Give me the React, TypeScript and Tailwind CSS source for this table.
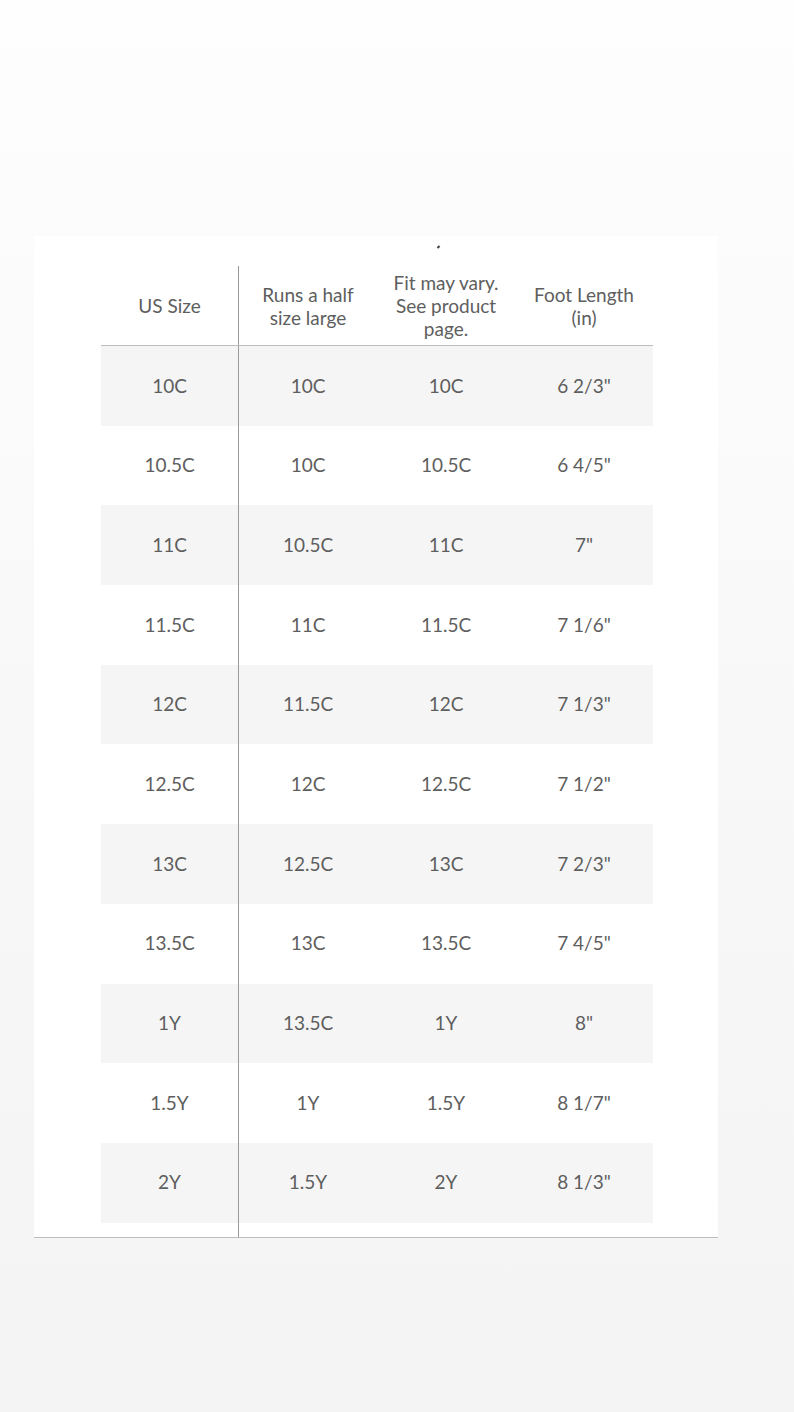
import React from 'react';

const rows: [string, string, string, string][] = [
  ['10C', '10C', '10C', '6 2/3"'],
  ['10.5C', '10C', '10.5C', '6 4/5"'],
  ['11C', '10.5C', '11C', '7"'],
  ['11.5C', '11C', '11.5C', '7 1/6"'],
  ['12C', '11.5C', '12C', '7 1/3"'],
  ['12.5C', '12C', '12.5C', '7 1/2"'],
  ['13C', '12.5C', '13C', '7 2/3"'],
  ['13.5C', '13C', '13.5C', '7 4/5"'],
  ['1Y', '13.5C', '1Y', '8"'],
  ['1.5Y', '1Y', '1.5Y', '8 1/7"'],
  ['2Y', '1.5Y', '2Y', '8 1/3"'],
];

const App: React.FC = () => {
  return (
    <div
      className="min-h-[1412px] w-full bg-gradient-to-b from-[#fefefe] via-[#f8f8f8] to-[#f4f4f4] pt-[236px] pl-[34px] text-[#5e5e5e]"
      style={{ fontFamily: 'Lato, "Liberation Sans", sans-serif' }}
    >
      <div className="relative w-[684px] bg-white border-b border-[#bdbdbd]">
        {/* stray mark above the header */}
        <div className="absolute left-[403px] top-[10px] h-[2px] w-[3px] -rotate-45 bg-[#444]" />

        <div className="pl-[67px] pr-[65px] pt-[30px]">
          {/* header */}
          <div className="flex h-[80px] border-b border-[#bdbdbd] text-[19px] leading-[23px] text-center">
            <div className="flex w-[138px] items-center justify-center border-r border-[#9a9a9a]">US Size</div>
            <div className="flex flex-1 items-center justify-center">
              Runs a half
              <br />
              size large
            </div>
            <div className="flex flex-1 items-center justify-center">
              Fit may vary.
              <br />
              See product
              <br />
              page.
            </div>
            <div className="flex flex-1 items-center justify-center">
              Foot Length
              <br />
              (in)
            </div>
          </div>

          {/* body */}
          {rows.map((r, i) => (
            <div
              key={i}
              className={`flex h-[79.7px] text-[19px] ${i % 2 === 0 ? 'bg-[#f5f5f5]' : 'bg-white'}`}
            >
              <div className="flex w-[138px] items-center justify-center border-r border-[#9a9a9a]">{r[0]}</div>
              <div className="flex flex-1 items-center justify-center">{r[1]}</div>
              <div className="flex flex-1 items-center justify-center">{r[2]}</div>
              <div className="flex flex-1 items-center justify-center">{r[3]}</div>
            </div>
          ))}

          <div className="flex h-[14px]">
            <div className="w-[138px] border-r border-[#9a9a9a]" />
          </div>
        </div>
      </div>
    </div>
  );
};

export default App;
